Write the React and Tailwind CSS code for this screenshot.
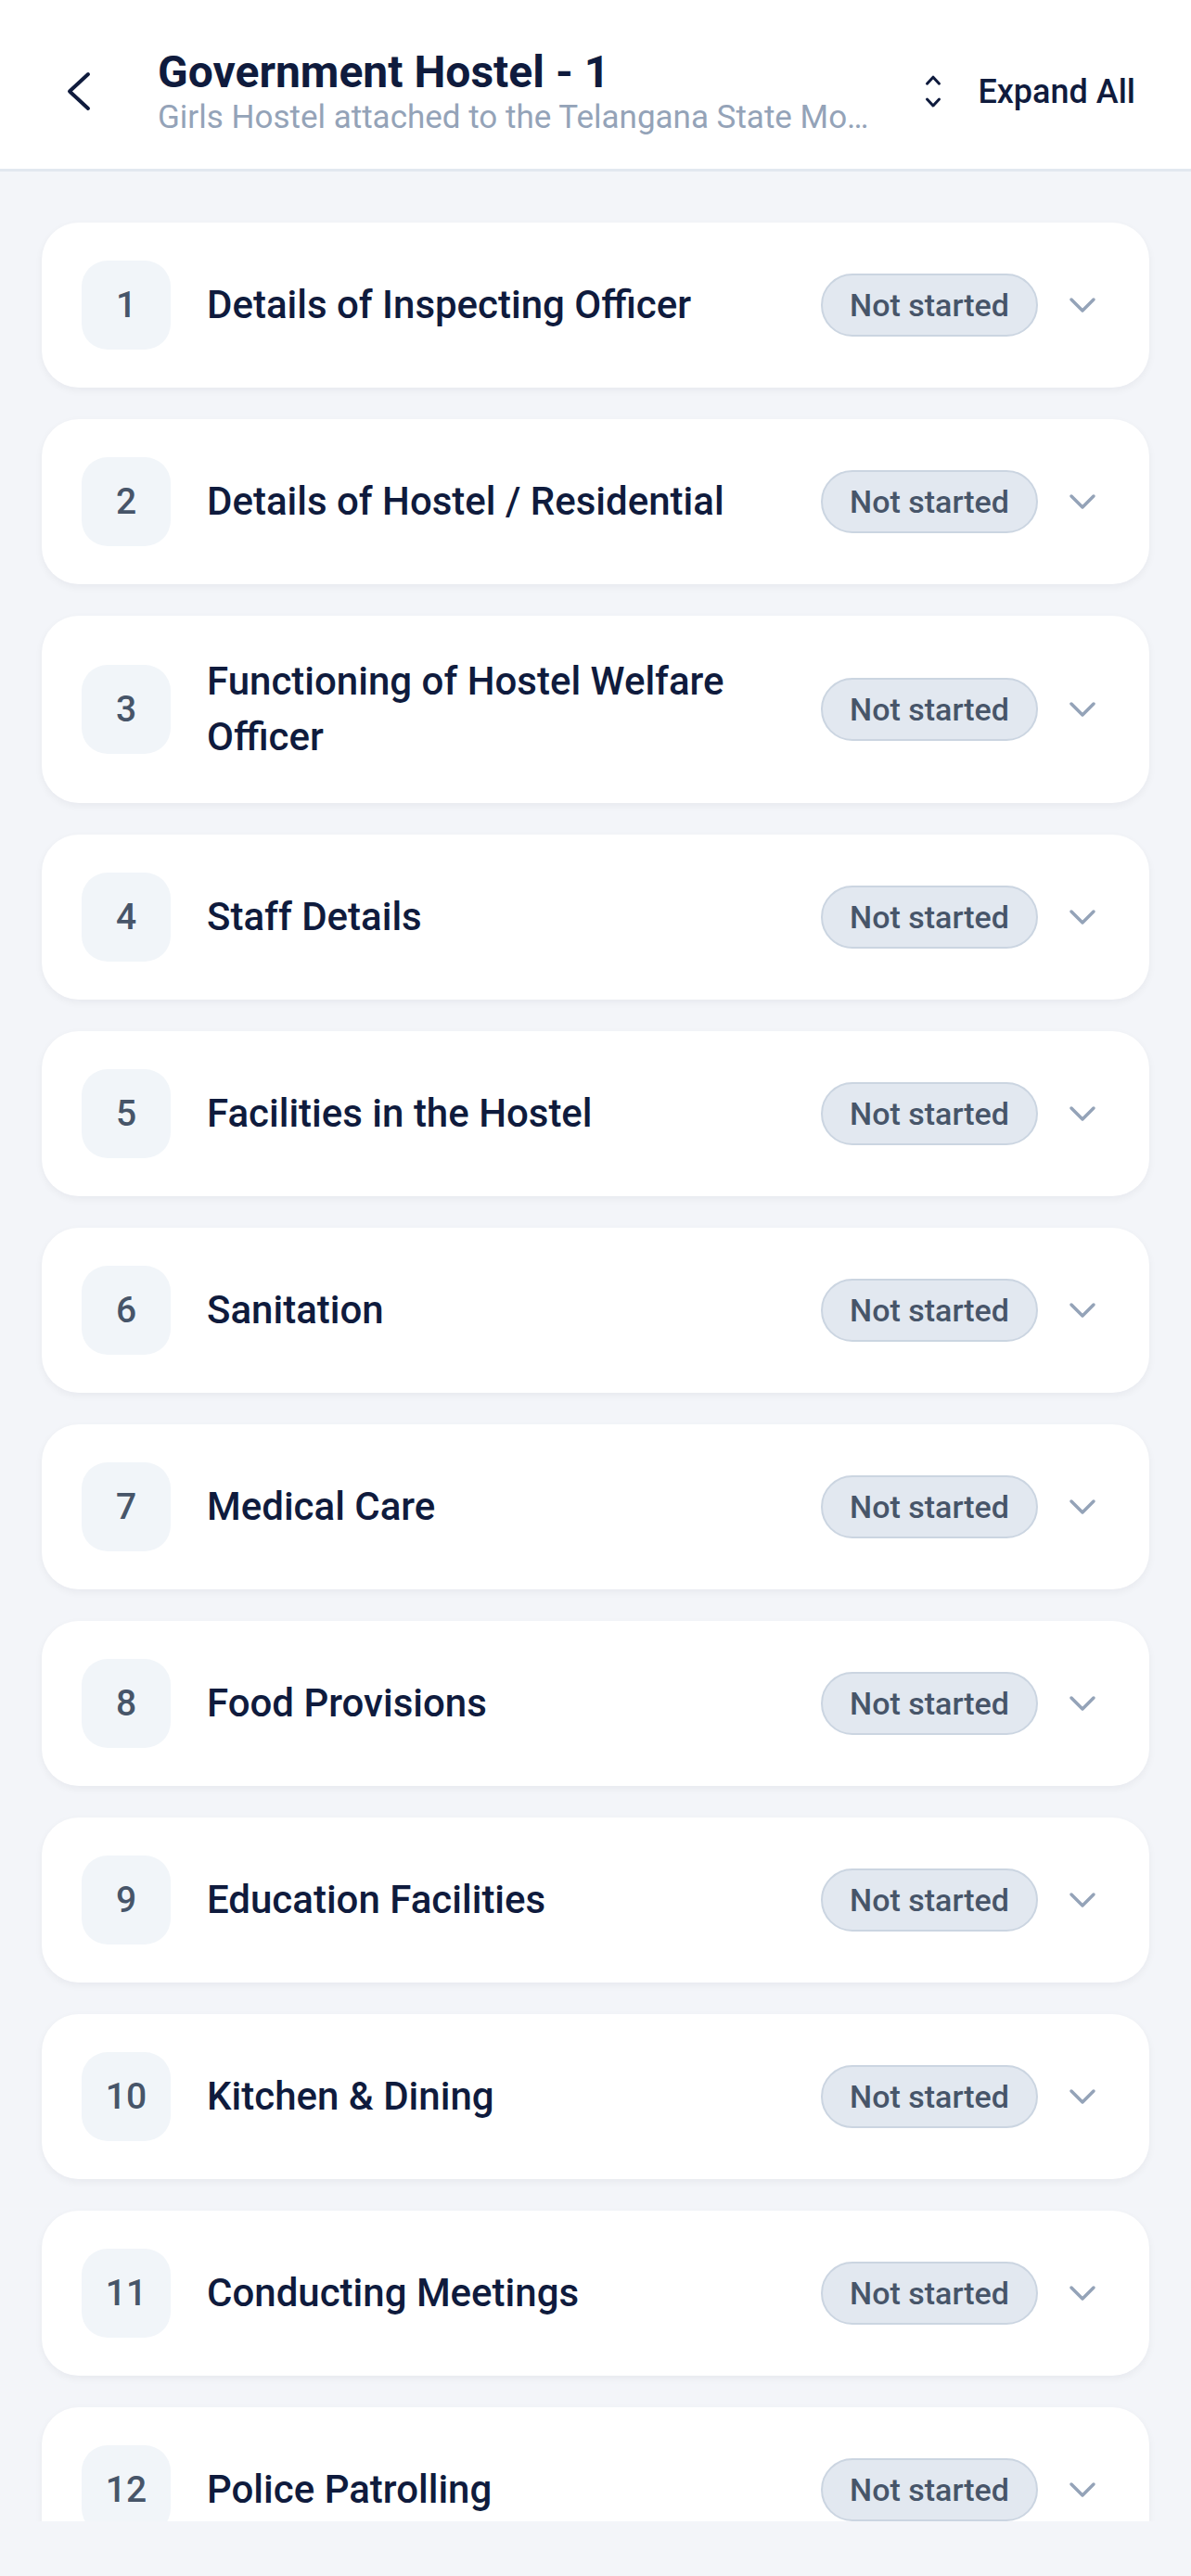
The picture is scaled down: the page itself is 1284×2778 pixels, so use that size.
import React from 'react';
import { ChevronDown } from 'lucide-react';

const sections = [
  'Details of Inspecting Officer',
  'Details of Hostel / Residential',
  'Functioning of Hostel Welfare Officer',
  'Staff Details',
  'Facilities in the Hostel',
  'Sanitation',
  'Medical Care',
  'Food Provisions',
  'Education Facilities',
  'Kitchen & Dining',
  'Conducting Meetings',
  'Police Patrolling',
];

function SectionCard({ index, title }) {
  return (
    <div className="flex items-center shrink-0 bg-white rounded-[40px] shadow-[0_3px_8px_rgba(15,23,42,0.05)] pl-[43px] pr-[48px] py-[41px]">
      <div className="w-[96px] h-[96px] shrink-0 rounded-[28px] bg-[#f1f5f9] flex items-center justify-center text-[39px] font-medium text-[#475569]">
        {index}
      </div>
      <div className="flex-1 min-w-0 ml-[39px] mr-[24px] text-[42px] leading-[60px] font-medium text-[#0f1b3d]">
        {title}
      </div>
      <span className="shrink-0 h-[68px] px-[29px] flex items-center rounded-full bg-[#e2e8f0] border-2 border-[#cbd5e1] text-[34px] font-medium text-[#475569]">
        Not started
      </span>
      <ChevronDown className="shrink-0 ml-[24px] text-[#94a3b8]" size={48} strokeWidth={1.75} />
    </div>
  );
}

export default function App() {
  return (
    <div className="h-[2778px] flex flex-col bg-[#f3f5f9] font-['Roboto','Noto_Sans',sans-serif] overflow-hidden">
      {/* Header */}
      <header className="h-[185px] shrink-0 flex items-center bg-white border-b-[3px] border-[#e2e8f0] pt-[16px] pl-[70px] pr-[60px]">
        <button className="shrink-0">
          <svg width="30" height="46" viewBox="0 0 30 46" fill="none" stroke="#0f1b3d" strokeWidth="4" strokeLinecap="round" strokeLinejoin="round">
            <polyline points="25,4 5,22.5 25,41" />
          </svg>
        </button>
        <div className="flex-1 min-w-0 ml-[70px]">
          <h1 className="text-[48px] leading-[56px] font-bold text-[#0f1b3d] truncate">Government Hostel - 1</h1>
          <p className="text-[35px] leading-[42px] text-[#94a3b8] truncate">
            Girls Hostel attached to the Telangana State Model School, Nalgonda
          </p>
        </div>
        <button className="shrink-0 ml-[50px] flex items-center gap-[38px]">
          <svg width="20" height="38" viewBox="0 0 20 38" fill="none" stroke="#0f1b3d" strokeWidth="3" strokeLinecap="round" strokeLinejoin="round">
            <polyline points="3.5,10.2 10,3.2 16.5,10.2" />
            <polyline points="3.5,27 10,34 16.5,27" />
          </svg>
          <span className="text-[36px] font-medium text-[#0f1b3d]">Expand All</span>
        </button>
      </header>

      {/* Sections */}
      <main className="h-[2534px] shrink-0 overflow-hidden px-[45px] pt-[55px] flex flex-col gap-[34px]">
        {sections.map((title, i) => (
          <SectionCard key={title} index={i + 1} title={title} />
        ))}
      </main>
    </div>
  );
}
